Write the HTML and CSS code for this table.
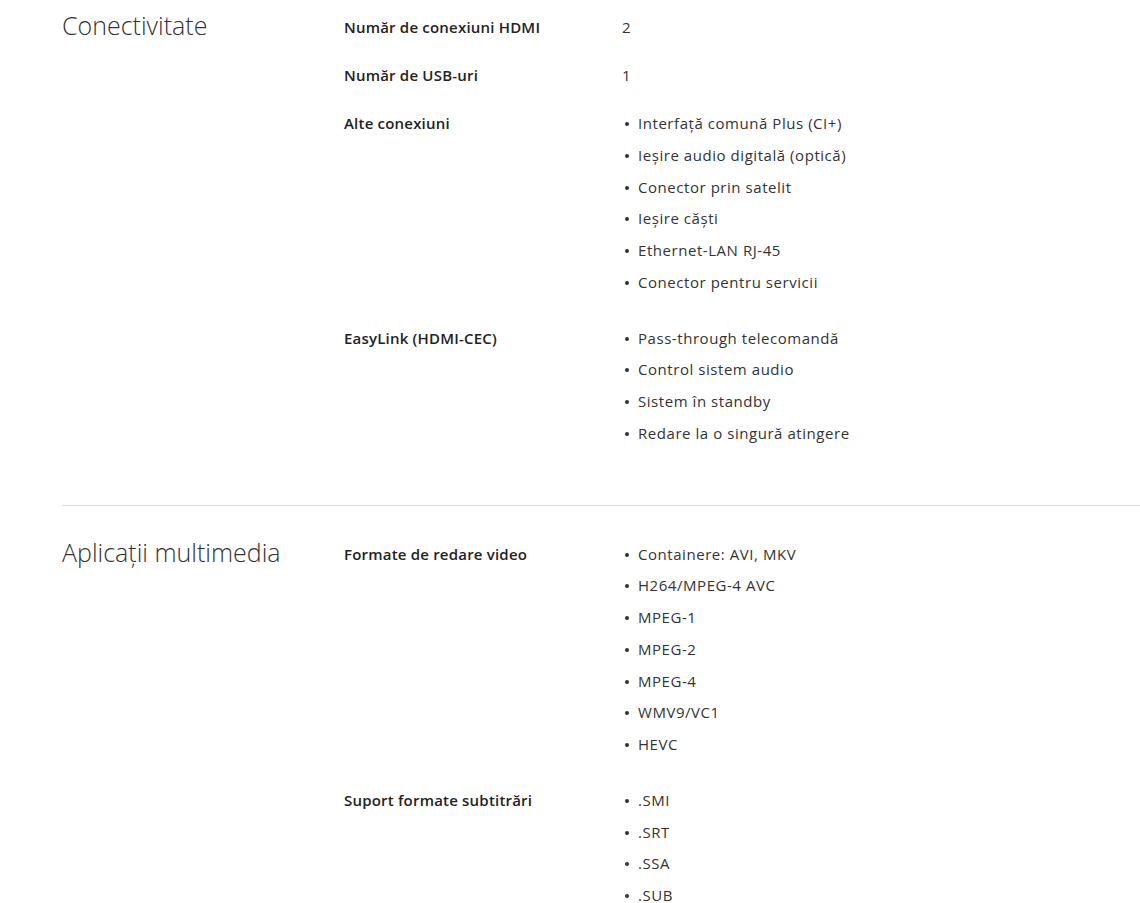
FILE: index.html
```html
<!DOCTYPE html>
<html lang="ro">
<head>
    <meta charset="UTF-8">
    <meta name="viewport" content="width=device-width, initial-scale=1.0">
    <title>Specificații</title>
    <link rel="stylesheet" href="styles.css">
</head>
<body>

    <div class="specs">
        <div class="spec-section">
            <h2 class="section-title">Conectivitate</h2>
            <div class="spec-rows">
                <div class="spec-row">
                    <div class="spec-label">Număr de conexiuni HDMI</div>
                    <div class="spec-value">2</div>
                </div>
                <div class="spec-row">
                    <div class="spec-label">Număr de USB-uri</div>
                    <div class="spec-value">1</div>
                </div>
                <div class="spec-row">
                    <div class="spec-label">Alte conexiuni</div>
                    <ul class="spec-list">
                        <li>Interfață comună Plus (CI+)</li>
                        <li>Ieșire audio digitală (optică)</li>
                        <li>Conector prin satelit</li>
                        <li>Ieșire căști</li>
                        <li>Ethernet-LAN RJ-45</li>
                        <li>Conector pentru servicii</li>
                    </ul>
                </div>
                <div class="spec-row">
                    <div class="spec-label">EasyLink (HDMI-CEC)</div>
                    <ul class="spec-list">
                        <li>Pass-through telecomandă</li>
                        <li>Control sistem audio</li>
                        <li>Sistem în standby</li>
                        <li>Redare la o singură atingere</li>
                    </ul>
                </div>
            </div>
        </div>

        <div class="spec-section">
            <h2 class="section-title">Aplicații multimedia</h2>
            <div class="spec-rows">
                <div class="spec-row">
                    <div class="spec-label">Formate de redare video</div>
                    <ul class="spec-list">
                        <li>Containere: AVI, MKV</li>
                        <li>H264/MPEG-4 AVC</li>
                        <li>MPEG-1</li>
                        <li>MPEG-2</li>
                        <li>MPEG-4</li>
                        <li>WMV9/VC1</li>
                        <li>HEVC</li>
                    </ul>
                </div>
                <div class="spec-row">
                    <div class="spec-label">Suport formate subtitrări</div>
                    <ul class="spec-list">
                        <li>.SMI</li>
                        <li>.SRT</li>
                        <li>.SSA</li>
                        <li>.SUB</li>
                    </ul>
                </div>
            </div>
        </div>
    </div>

</body>
</html>
```

FILE: styles.css
```css
body {
    margin: 0;
    font-family: "Open Sans", Arial, sans-serif;
    font-size: 15px;
    color: #333;
    background-color: #fff;
}
.specs {
    padding-left: 62px;
}
.spec-section {
    display: flex;
    padding: 36px 0 28px;
    border-bottom: 1px solid #dcdcdc;
}
.spec-section:first-child {
    padding-top: 15px;
}
.section-title {
    width: 282px;
    flex-shrink: 0;
    margin: -2px 0 0;
    font-size: 25px;
    font-weight: 300;
    line-height: 24px;
    color: #333;
}
.spec-rows {
    flex: 1;
}
.spec-row {
    display: flex;
    margin-bottom: 24px;
    line-height: 24px;
}
.spec-label {
    width: 278px;
    flex-shrink: 0;
    font-weight: 600;
    letter-spacing: 0.2px;
    color: #222;
}
.spec-value {
    color: #333;
    letter-spacing: 0.55px;
}
.spec-list {
    margin: 0;
    padding: 0;
    list-style: none;
}
.spec-list li {
    position: relative;
    padding-left: 16px;
    margin-bottom: 7.75px;
    color: #333;
    letter-spacing: 0.55px;
}
.spec-list li::before {
    content: "";
    position: absolute;
    left: 3px;
    top: 11px;
    width: 4px;
    height: 4px;
    border-radius: 50%;
    background: #333;
}
```
